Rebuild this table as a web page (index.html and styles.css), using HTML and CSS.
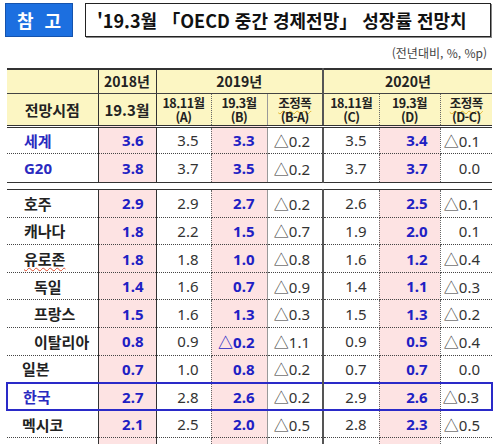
FILE: index.html
```html
<!DOCTYPE html>
<html lang="ko">
<head>
    <meta charset="UTF-8">
    <title>OECD 중간 경제전망</title>
    <link rel="stylesheet" href="styles.css">
</head>
<body>
    <div class="page">
        <div class="top">
            <div class="badge">참 고</div>
            <div class="title-box">'19.3월 「OECD 중간 경제전망」 성장률 전망치</div>
        </div>
        <div class="unit">(전년대비, %, %p)</div>

        <table class="growth">
            <colgroup>
                <col style="width:91px">
                <col style="width:58px">
                <col style="width:55px">
                <col style="width:56px">
                <col style="width:56px">
                <col style="width:56px">
                <col style="width:61px">
                <col style="width:52px">
            </colgroup>
            <thead>
                <tr class="head-1">
                    <th class="c-label"></th>
                    <th class="c-2018">2018년</th>
                    <th colspan="3" class="c-ba">2019년</th>
                    <th colspan="3">2020년</th>
                </tr>
                <tr class="head-2">
                    <th class="c-label">전망시점</th>
                    <th class="c-2018">19.3월</th>
                    <th class="c-a"><span class="ln">18.11월</span><span class="ln">(A)</span></th>
                    <th class="c-b"><span class="ln">19.3월</span><span class="ln">(B)</span></th>
                    <th class="c-ba"><span class="ln squiggle">조정폭</span><span class="ln">(B-A)</span></th>
                    <th class="c-c"><span class="ln">18.11월</span><span class="ln">(C)</span></th>
                    <th class="c-d"><span class="ln">19.3월</span><span class="ln">(D)</span></th>
                    <th><span class="ln squiggle">조정폭</span><span class="ln">(D-C)</span></th>
                </tr>
            </thead>
            <tbody>
                <tr>
                    <td class="c-label lv1 blue">세계</td>
                    <td class="c-2018 hl">3.6</td><td class="c-a">3.5</td><td class="c-b hl">3.3</td><td class="c-ba">△0.2</td>
                    <td class="c-c">3.5</td><td class="c-d hl">3.4</td><td>△0.1</td>
                </tr>
                <tr class="group-end">
                    <td class="c-label lv1 blue">G20</td>
                    <td class="c-2018 hl">3.8</td><td class="c-a">3.7</td><td class="c-b hl">3.5</td><td class="c-ba">△0.2</td>
                    <td class="c-c">3.7</td><td class="c-d hl">3.7</td><td>0.0</td>
                </tr>
                <tr class="gap"><td colspan="8"></td></tr>
                <tr>
                    <td class="c-label lv1">호주</td>
                    <td class="c-2018 hl">2.9</td><td class="c-a">2.9</td><td class="c-b hl">2.7</td><td class="c-ba">△0.2</td>
                    <td class="c-c">2.6</td><td class="c-d hl">2.5</td><td>△0.1</td>
                </tr>
                <tr>
                    <td class="c-label lv1">캐나다</td>
                    <td class="c-2018 hl">1.8</td><td class="c-a">2.2</td><td class="c-b hl">1.5</td><td class="c-ba">△0.7</td>
                    <td class="c-c">1.9</td><td class="c-d hl">2.0</td><td>0.1</td>
                </tr>
                <tr>
                    <td class="c-label lv1"><span class="squiggle red">유로존</span></td>
                    <td class="c-2018 hl">1.8</td><td class="c-a">1.8</td><td class="c-b hl">1.0</td><td class="c-ba">△0.8</td>
                    <td class="c-c">1.6</td><td class="c-d hl">1.2</td><td>△0.4</td>
                </tr>
                <tr>
                    <td class="c-label lv2">독일</td>
                    <td class="c-2018 hl">1.4</td><td class="c-a">1.6</td><td class="c-b hl">0.7</td><td class="c-ba">△0.9</td>
                    <td class="c-c">1.4</td><td class="c-d hl">1.1</td><td>△0.3</td>
                </tr>
                <tr>
                    <td class="c-label lv2">프랑스</td>
                    <td class="c-2018 hl">1.5</td><td class="c-a">1.6</td><td class="c-b hl">1.3</td><td class="c-ba">△0.3</td>
                    <td class="c-c">1.5</td><td class="c-d hl">1.3</td><td>△0.2</td>
                </tr>
                <tr>
                    <td class="c-label lv2">이탈리아</td>
                    <td class="c-2018 hl">0.8</td><td class="c-a">0.9</td><td class="c-b hl">△0.2</td><td class="c-ba">△1.1</td>
                    <td class="c-c">0.9</td><td class="c-d hl">0.5</td><td>△0.4</td>
                </tr>
                <tr>
                    <td class="c-label lv0">일본</td>
                    <td class="c-2018 hl">0.7</td><td class="c-a">1.0</td><td class="c-b hl">0.8</td><td class="c-ba">△0.2</td>
                    <td class="c-c">0.7</td><td class="c-d hl">0.7</td><td>0.0</td>
                </tr>
                <tr class="korea">
                    <td class="c-label lv0 blue">한국</td>
                    <td class="c-2018 hl">2.7</td><td class="c-a">2.8</td><td class="c-b hl">2.6</td><td class="c-ba">△0.2</td>
                    <td class="c-c">2.9</td><td class="c-d hl">2.6</td><td>△0.3</td>
                </tr>
                <tr>
                    <td class="c-label lv0">멕시코</td>
                    <td class="c-2018 hl">2.1</td><td class="c-a">2.5</td><td class="c-b hl">2.0</td><td class="c-ba">△0.5</td>
                    <td class="c-c">2.8</td><td class="c-d hl">2.3</td><td>△0.5</td>
                </tr>
                <tr>
                    <td class="c-label lv0"></td>
                    <td class="c-2018 hl"></td><td class="c-a"></td><td class="c-b hl"></td><td class="c-ba"></td>
                    <td class="c-c"></td><td class="c-d hl"></td><td></td>
                </tr>
            </tbody>
        </table>
    </div>
</body>
</html>
```

FILE: styles.css
```css
/* Reset */
* {
    margin: 0;
    padding: 0;
    box-sizing: border-box;
}

body {
    font-family: "Noto Sans", "Noto Sans CJK KR", sans-serif;
    color: #333;
    background: white;
    overflow: hidden;
}

.page {
    width: 500px;
    height: 444px;
    padding: 3px 9px 0 5px;
    overflow: hidden;
}

/* Title bar */
.top {
    display: flex;
    gap: 12px;
    height: 34px;
}

.badge {
    width: 68px;
    background-color: #1c6fe0;
    border: 1px solid #1553ad;
    color: white;
    font-family: "Noto Sans CJK KR", sans-serif;
    font-weight: 700;
    font-size: 18px;
    word-spacing: 6px;
    display: flex;
    align-items: center;
    justify-content: center;
}

.title-box {
    flex: 1;
    border: 1px solid #222;
    box-shadow: 1px 1px 0 #888;
    font-family: "Noto Sans CJK KR", sans-serif;
    font-weight: 700;
    font-size: 18px;
    color: #111;
    display: flex;
    align-items: center;
    padding-left: 11px;
}

.unit {
    text-align: right;
    font-family: "Noto Sans CJK KR", sans-serif;
    font-size: 12px;
    line-height: 16px;
    margin-top: 8px;
    padding-right: 4px;
    color: #444;
}

/* Table */
.growth {
    margin-top: 7px;
    margin-left: 1px;
    width: 485px;
    table-layout: fixed;
    border-collapse: collapse;
    font-size: 15px;
}

.growth thead tr {
    background-color: #fcf6c3;
}

.growth th {
    font-family: "Noto Sans CJK KR", sans-serif;
    font-weight: 700;
    color: #222;
    text-align: center;
    vertical-align: middle;
}

.head-1 th {
    height: 24px;
    font-size: 14px;
    border-top: 2px solid #333;
    border-bottom: 1px solid #444;
}

.head-2 th {
    height: 33px;
    font-size: 13px;
    border-bottom: 3px double #333;
    letter-spacing: -0.5px;
}

.head-2 .ln {
    display: block;
    height: 13px;
    line-height: 13px;
    font-size: 12.5px;
}

.head-2 .ln + .ln {
    margin-top: 1px;
}

.head-2 th.c-label,
.head-2 th.c-2018 {
    font-size: 15px;
    letter-spacing: 0;
}

.squiggle {
    text-decoration: underline wavy #e0b020;
    text-decoration-thickness: 1px;
    text-underline-offset: 2px;
}

.squiggle.red {
    text-decoration-color: #e05030;
}

.growth td {
    height: 27.6px;
    text-align: right;
    padding-right: 12px;
    color: #333;
    border-bottom: 1px dotted #444;
}

/* column separators */
.c-label { border-right: 1px solid #333; }
.c-2018 { border-right: 1.5px solid #333; }
.c-a { border-right: 1px dotted #666; }
.c-b { border-right: 1px solid #999; }
.c-ba { border-right: 2px solid #555; }
.c-c { border-right: 1px dotted #666; }
.c-d { border-right: 1px dotted #666; }

.growth td.hl {
    background-color: #fde3e3;
    color: #2020c4;
    font-weight: 700;
}

.growth td.c-label {
    text-align: left;
    padding-right: 0;
    font-family: "Noto Sans CJK KR", sans-serif;
    font-weight: 700;
    color: #222;
}

.growth td.lv0 { padding-left: 15px; }
.growth td.lv1 { padding-left: 17px; }
.growth td.lv2 { padding-left: 27px; }

.growth td.blue {
    color: #2a2ac0;
    font-family: "Noto Sans", "Noto Sans CJK KR", sans-serif;
}

.group-end td {
    height: 29px;
    border-bottom: 1.5px solid #333;
}

.gap td {
    height: 7px;
    padding: 0;
    background: white;
    border-bottom: 1.5px solid #333;
    border-right: none;
}

.korea td {
    border-top: 2px solid #2a2ac8;
    border-bottom: 2px solid #2a2ac8;
}

.korea td:first-child {
    border-left: 2px solid #2a2ac8;
}

.korea td:last-child {
    border-right: 2px solid #2a2ac8;
}
```
